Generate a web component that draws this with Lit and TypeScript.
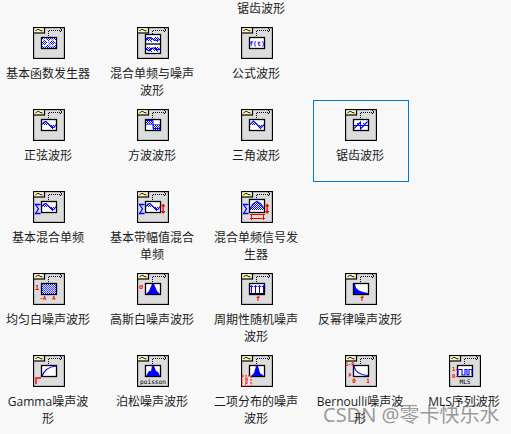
import { LitElement, html, css, svg } from "lit";
import { customElement } from "lit/decorators.js";

const BLUE = "#0000ff";
const RED = "#ff0000";
const line = (d: string, c = BLUE, w = 1) =>
  svg`<path d=${d} fill="none" stroke=${c} stroke-width=${w}/>`;
const fill = (d: string, c = BLUE) => svg`<path d=${d} fill=${c}/>`;
const plot = (x: number, y: number, w: number, h: number) =>
  svg`<rect x=${x + 0.5} y=${y + 0.5} width=${w - 1} height=${h - 1} fill="#fff" stroke="#000" stroke-width="1.3"/>`;
const label = (x: number, y: number, t: string, c = RED, size = 6, anchor = "middle") =>
  svg`<text x=${x} y=${y} fill=${c} font-size=${size} font-weight="700" text-anchor=${anchor} font-family="'DejaVu Sans Mono','Liberation Mono',monospace">${t}</text>`;
const checks = (x: number, y: number, w: number, h: number, clip?: (px: number) => [number, number]) => {
  const out = [];
  for (let i = 0; i < w; i++) {
    const [a, b] = clip ? clip(i) : [0, h];
    for (let j = a; j < b; j++) if ((i + j) % 2 === 0) out.push(`M${x + i} ${y + j}h1v1h-1z`);
  }
  return svg`<path d=${out.join("")} fill=${BLUE} shape-rendering="crispEdges"/>`;
};
const sigma = line("M7.5 13.5H2.5L5.5 18L2.5 22.5H7.5", BLUE, 1.3);

const sineY = (i: number, amp = 4) => Math.round(5 - amp * Math.sin((i / 13) * Math.PI * 2));
const sine = [
  plot(8, 10, 16, 12),
  checks(9, 11, 14, 10, (i) => {
    const y = sineY(i);
    return y < 5 ? [y, 5] : [5, y];
  }),
  line("M9 15.5L11 13L13 12.5L16 15.5L19 18.5L21 18.5L23 15.5", BLUE, 1.1),
];
const redArrow = [
  fill("M25.5 15h1.4v6h-1.4z", RED),
  fill("M26.2 12.5l2.4 3h-4.8zM26.2 23l-2.4-3h4.8z", RED),
];

const icons: Record<string, unknown> = {
  basic: [
    plot(8, 10, 16, 12),
    checks(9, 11, 14, 10, (i) => [0, 10]),
    line("M9 14L12 12L15 15L18 13L21 13L23 15", "#fff", 1.1),
    line("M9 18L12 19L15 16L18 19L23 17", "#fff", 1.1),
  ],
  mix: [
    plot(8, 7, 16, 20),
    line("M8 17H24", "#000", 1.3),
    checks(9, 9, 14, 6, (i) => [i % 8 < 4 ? 1 : 2, 4 + (i % 3)]),
    line("M9 13.5L11 11L14 10.5L17 13L20 13.5L23 12.5", BLUE, 1.1),
    checks(9, 19, 14, 6, (i) => [i % 8 < 4 ? 1 : 2, 4 + (i % 3)]),
    line("M9 22L12 24L15 21L18 21L20 23L23 22", BLUE, 1.1),
  ],
  formula: [plot(8, 10, 16, 12), label(16, 18.6, "f(t)", BLUE, 6.5)],
  sine: sine,
  square: [
    plot(8, 10, 16, 12),
    checks(9, 11, 7, 5),
    checks(16, 16, 7, 5),
    line("M9 15.5H23", "#66f"),
    line("M9 11.5H16V19.5H23"),
  ],
  triangle: [
    plot(8, 10, 16, 12),
    checks(9, 11, 14, 10, (i) => {
      const a = Math.abs(i - 3.5);
      const b = Math.abs(i - 10.5);
      return i < 7 ? [Math.round(1 + a), 5] : [5, Math.round(9 - b)];
    }),
    line("M9 15.5L12.5 12L16 15.5L19.5 19.5L23 15.5", BLUE, 1.1),
  ],
  saw: [
    plot(8, 10, 16, 12),
    line("M9 16.5H23", BLUE),
    line("M9 19.5L15.5 13V20L22.5 12.5", BLUE, 1.1),
    checks(12, 14, 3, 2),
    checks(18, 14, 3, 2),
  ],
  basicMix: [sigma, ...sine],
  ampMix: [sigma, ...sine, ...redArrow],
  genMix: [
    sigma,
    plot(8, 8, 16, 14),
    checks(9, 10, 14, 10, (i) => [Math.round(6 - 5 * Math.sin((i / 13) * Math.PI)), 9]),
    line("M9 18L12 13L16 10.5L20 13L23 18", BLUE, 1.1),
    ...redArrow,
    line("M9 23.5H24M9 27.5H24", RED, 1.2),
    line("M10.5 23V29M22.5 23V29", RED),
  ],
  uniform: [
    plot(8, 10, 16, 12),
    checks(9, 11, 14, 10),
    svg`<rect x="10" y="12" width="12" height="8" fill="#9aa6ff" opacity=".5"/>`,
    label(4, 17, "1", RED, 7),
    label(10, 27, "-A", RED, 5.5),
    label(21, 27, "A", RED, 5.5),
  ],
  gauss: [
    plot(8, 10, 16, 12),
    fill("M9 21L12 18L15 11L17 11L20 18L23 21z"),
    label(4, 16, "σ", RED, 7),
  ],
  periodic: [
    plot(8, 10, 16, 12),
    line("M9 20.5H23", "#000"),
    line("M10.5 13V20M14.5 13V20M18.5 13V20M22.5 13V20"),
    fill("M10.5 12l2 2h-4zM14.5 12l2 2h-4zM18.5 12l2 2h-4zM22.5 12l2 2h-4z"),
    label(17, 28, "f", RED, 7),
  ],
  inverse: [
    plot(8, 10, 16, 12),
    fill("M9 11H10L11 15L14 17.5L18 19L23 20V21H9z"),
    label(17, 28, "f", RED, 7),
  ],
  gamma: [
    plot(8, 10, 16, 12),
    line("M9 21C11 15 15 12 23 11", BLUE, 1.2),
    line("M3 29V23H8", RED, 1.4),
  ],
  poisson: [
    plot(8, 10, 16, 12),
    fill("M9 21L12 16L14 16L15 11L17 11L19 16L21 17L23 21z"),
    svg`<text x="16" y="29" fill="#000" font-size="6.2" text-anchor="middle" font-family="'DejaVu Sans Mono',monospace">poisson</text>`,
  ],
  binomial: [
    plot(8, 10, 16, 12),
    fill("M10 21L13 18L15 11L17 11L19 18L23 21z"),
    svg`<rect x="1" y="21" width="9" height="10" fill="#ececec" stroke="#f00" stroke-width="1" stroke-dasharray="2 1"/>`,
    label(5.5, 25.5, "N", RED, 5),
    label(5.5, 30, "P", RED, 5),
  ],
  bernoulli: [
    plot(8, 10, 16, 12),
    line("M9 11C10 17 14 20 23 20.5", BLUE, 1.2),
    label(5, 11, "1-P", RED, 5),
    label(5, 22, "P", RED, 5),
    label(9, 28, "0", RED, 6),
    label(23, 28, "1", RED, 6),
  ],
  mls: [
    plot(8, 10, 16, 12),
    line("M9 20V14.5H13V20H16V14.5H18V20H20V14.5H23V20", BLUE, 1.1),
    label(3, 16, "1-", RED, 5.5, "start"),
    label(3, 23, "0-", RED, 5.5, "start"),
    svg`<text x="16" y="29" fill="#000" font-size="6.2" text-anchor="middle" font-family="'DejaVu Sans Mono',monospace">MLS</text>`,
  ],
};

const items: { t: string; i: string; sel?: boolean }[][] = [
  [
    { t: "基本函数发生器", i: "basic" },
    { t: "混合单频与噪声波形", i: "mix" },
    { t: "公式波形", i: "formula" },
  ],
  [
    { t: "正弦波形", i: "sine" },
    { t: "方波波形", i: "square" },
    { t: "三角波形", i: "triangle" },
    { t: "锯齿波形", i: "saw", sel: true },
  ],
  [
    { t: "基本混合单频", i: "basicMix" },
    { t: "基本带幅值混合单频", i: "ampMix" },
    { t: "混合单频信号发生器", i: "genMix" },
  ],
  [
    { t: "均匀白噪声波形", i: "uniform" },
    { t: "高斯白噪声波形", i: "gauss" },
    { t: "周期性随机噪声波形", i: "periodic" },
    { t: "反幂律噪声波形", i: "inverse" },
  ],
  [
    { t: "Gamma噪声波形", i: "gamma" },
    { t: "泊松噪声波形", i: "poisson" },
    { t: "二项分布的噪声波形", i: "binomial" },
    { t: "Bernoulli噪声波形", i: "bernoulli" },
    { t: "MLS序列波形", i: "mls" },
  ],
];

const frame = (inner: unknown) => html`<svg class="icon" width="32" height="32" viewBox="0 0 32 32">
  <rect x="0.5" y="0.5" width="31" height="31" fill="#dcdcdc" stroke="#000" stroke-width="1.3"/>
  <rect x="0.5" y="0.5" width="11" height="5.5" fill="#fff6c4" stroke="#000" stroke-width="1.2"/>
  <path d="M2.5 3.8L4.5 2.6H6L8 3.8H9.5" fill="none" stroke="#000" stroke-width="0.9"/>
  <path d="M15.5 9V3H27" fill="none" stroke="#000" stroke-dasharray="1 1" shape-rendering="crispEdges"/>
  <path d="M27 1L29 3L27 5" fill="none" stroke="#000"/>
  ${inner}
</svg>`;

@customElement("app-root")
export class AppRoot extends LitElement {
  static styles = css`
    :host {
      display: block;
      position: relative;
      width: 511px;
      height: 434px;
      overflow: hidden;
      background: #f8f8f8;
      color: #1c1c1c;
      font: 12px/17px "Open Sans", "Noto Sans CJK SC", sans-serif;
    }
    .title {
      width: 522px;
      height: 18px;
      text-align: center;
    }
    .grid {
      display: grid;
      grid-template-columns: repeat(5, 96px);
      grid-auto-rows: 82px;
      column-gap: 8px;
      padding-left: 1px;
    }
    .cell {
      display: flex;
      flex-direction: column;
      align-items: center;
      padding-top: 9px;
      box-sizing: border-box;
    }
    .cell.sel {
      box-shadow: inset 0 0 0 1px #0078d7;
    }
    .icon {
      display: block;
      flex: none;
    }
    .label {
      width: 87px;
      margin: 6px 2px 0 0;
      text-align: center;
      word-break: break-all;
    }
    .mark {
      position: absolute;
      left: 323px;
      top: 402px;
      font-family: "Noto Sans", "Noto Sans CJK SC", sans-serif;
      font-size: 20px;
      line-height: 26px;
      white-space: nowrap;
      color: rgba(90, 90, 90, 0.62);
    }
  `;

  render() {
    return html`
      <div class="title">锯齿波形</div>
      <div class="grid">
        ${items.flatMap((row) => {
          const cells = row.map(
            (c) => html`<div class="cell ${c.sel ? "sel" : ""}">
              ${frame(icons[c.i])}
              <div class="label">${c.t}</div>
            </div>`
          );
          const pad = Array.from({ length: 5 - row.length }, () => html`<div></div>`);
          return [...cells, ...pad];
        })}
      </div>
      <div class="mark">CSDN @零卡快乐水</div>
    `;
  }
}
